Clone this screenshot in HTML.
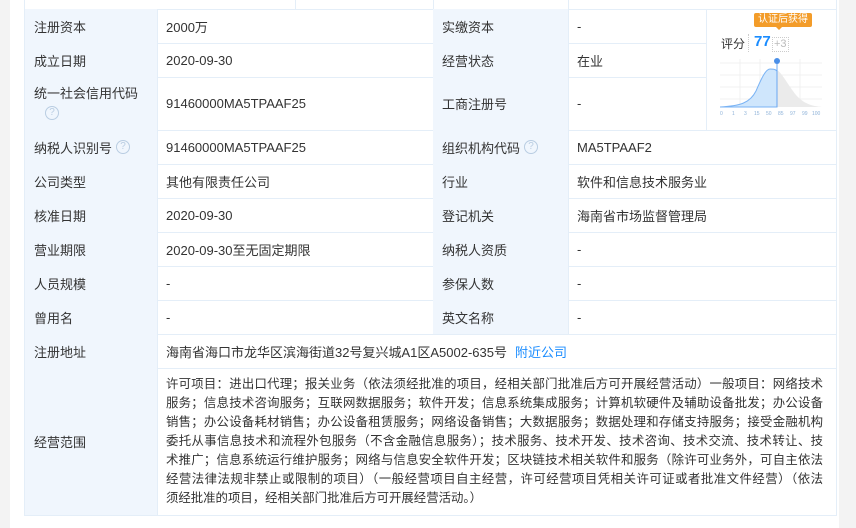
<!DOCTYPE html>
<html><head><meta charset="utf-8"><style>
*{margin:0;padding:0;box-sizing:border-box}
body{width:856px;height:528px;background:#fff;position:relative;overflow:hidden;font-family:"Liberation Sans","Noto Sans CJK SC",sans-serif;font-size:13px;color:#333}
.g{position:absolute;background:#f3f3f3}
.c{position:absolute;border-right:1px solid #e4eef8;border-bottom:1px solid #e4eef8;display:flex;align-items:center;padding-left:9px}
.l{background:#f0f6fd}
.q{display:inline-block;width:14px;height:14px;border:1px solid #b9cde2;border-radius:50%;color:#b9cde2;font-size:10px;line-height:12px;text-align:center;margin-left:4px;vertical-align:middle}
.sc div{display:block;text-align:justify;text-align-last:justify;white-space:nowrap;height:19px;line-height:19px;font-size:12.4px;overflow:visible}
</style></head><body>
<div class="g" style="left:0;top:0;width:10px;height:528px"></div>
<div class="g" style="left:839px;top:0;width:17px;height:528px"></div>
<div style="position:absolute;left:24px;top:0;width:813px;height:516px;border-left:1px solid #e4eef8"></div>
<div class="c" style="left:24px;top:0;width:134px;height:10px;border-right:none"></div>
<div class="c" style="left:157px;top:0;width:139px;height:10px"></div>
<div class="c" style="left:295px;top:0;width:139px;height:10px"></div>
<div class="c" style="left:433px;top:0;width:136px;height:10px"></div>
<div class="c" style="left:568px;top:0;width:269px;height:10px"></div>

<div class="c l" style="left:25px;top:9px;width:133px;height:35px">注册资本</div>
<div class="c" style="left:157px;top:9px;width:277px;height:35px">2000万</div>
<div class="c l" style="left:433px;top:9px;width:136px;height:35px">实缴资本</div>
<div class="c" style="left:568px;top:9px;width:139px;height:35px">-</div>

<div class="c l" style="left:25px;top:43px;width:133px;height:35px">成立日期</div>
<div class="c" style="left:157px;top:43px;width:277px;height:35px">2020-09-30</div>
<div class="c l" style="left:433px;top:43px;width:136px;height:35px">经营状态</div>
<div class="c" style="left:568px;top:43px;width:139px;height:35px">在业</div>

<div class="c l" style="left:25px;top:77px;width:133px;height:54px;display:block;padding-top:8px;line-height:18px">统一社会信用代码<br><span class="q" style="margin-left:11px">?</span></div>
<div class="c" style="left:157px;top:77px;width:277px;height:54px">91460000MA5TPAAF25</div>
<div class="c l" style="left:433px;top:77px;width:136px;height:54px">工商注册号</div>
<div class="c" style="left:568px;top:77px;width:139px;height:54px">-</div>

<div class="c" style="left:706px;top:9px;width:131px;height:122px;display:block;padding:0">
<div style="position:absolute;left:48px;top:4px;background:#f39c29;color:#fff;font-size:10px;line-height:14px;padding:0 4px;border-radius:2px">认证后获得</div>
<div style="position:absolute;left:70px;top:18px;width:0;height:0;border:3px solid transparent;border-top-color:#f39c29"></div>
<div style="position:absolute;left:15px;top:26px;font-size:12px;color:#333">评分</div>
<div style="position:absolute;left:42px;top:25px;height:18px;border-left:1px dotted #ccc"></div>
<div style="position:absolute;left:48px;top:24px;font-size:15px;font-weight:bold;color:#1a8cff">77</div>
<div style="position:absolute;left:66px;top:28px;border:1px dotted #ccc;font-size:11px;color:#bbb;padding:0 1px;line-height:13px">+3</div>
<svg style="position:absolute;left:14px;top:46px" width="106" height="62" viewBox="0 0 106 62">
<g stroke="#f0f0f0" stroke-width="1"><line x1="0" y1="8" x2="102" y2="8"/><line x1="0" y1="20" x2="102" y2="20"/><line x1="0" y1="32" x2="102" y2="32"/><line x1="0" y1="44" x2="102" y2="44"/><line x1="20" y1="4" x2="20" y2="52"/><line x1="40" y1="4" x2="40" y2="52"/><line x1="80" y1="4" x2="80" y2="52"/></g>
<path d="M57 15 C62 18 68 30 76 40 C84 49 92 51 102 52 L57 52Z" fill="#ebebeb"/>
<path d="M0 52 C20 51 30 48 36 36 C42 22 46 14 50 14 C53 14 55 14 57 16 L57 52Z" fill="#cfe6fc" stroke="#7ab3f4"/>
<line x1="57" y1="6" x2="57" y2="52" stroke="#6aa7f2"/>
<circle cx="57" cy="6" r="3" fill="#4a8fe8"/>
<g font-size="5" fill="#8fb3d9" font-family="Liberation Sans"><text x="0" y="60">0</text><text x="12" y="60">1</text><text x="24" y="60">3</text><text x="34" y="60">15</text><text x="46" y="60">50</text><text x="58" y="60">85</text><text x="70" y="60">97</text><text x="82" y="60">99</text><text x="92" y="60">100</text></g>
</svg>
</div>

<div class="c l" style="left:25px;top:130px;width:133px;height:35px">纳税人识别号<span class="q">?</span></div>
<div class="c" style="left:157px;top:130px;width:277px;height:35px">91460000MA5TPAAF25</div>
<div class="c l" style="left:433px;top:130px;width:136px;height:35px">组织机构代码<span class="q">?</span></div>
<div class="c" style="left:568px;top:130px;width:269px;height:35px">MA5TPAAF2</div>

<div class="c l" style="left:25px;top:164px;width:133px;height:35px">公司类型</div>
<div class="c" style="left:157px;top:164px;width:277px;height:35px">其他有限责任公司</div>
<div class="c l" style="left:433px;top:164px;width:136px;height:35px">行业</div>
<div class="c" style="left:568px;top:164px;width:269px;height:35px">软件和信息技术服务业</div>

<div class="c l" style="left:25px;top:198px;width:133px;height:35px">核准日期</div>
<div class="c" style="left:157px;top:198px;width:277px;height:35px">2020-09-30</div>
<div class="c l" style="left:433px;top:198px;width:136px;height:35px">登记机关</div>
<div class="c" style="left:568px;top:198px;width:269px;height:35px">海南省市场监督管理局</div>

<div class="c l" style="left:25px;top:232px;width:133px;height:35px">营业期限</div>
<div class="c" style="left:157px;top:232px;width:277px;height:35px">2020-09-30至无固定期限</div>
<div class="c l" style="left:433px;top:232px;width:136px;height:35px">纳税人资质</div>
<div class="c" style="left:568px;top:232px;width:269px;height:35px">-</div>

<div class="c l" style="left:25px;top:266px;width:133px;height:35px">人员规模</div>
<div class="c" style="left:157px;top:266px;width:277px;height:35px">-</div>
<div class="c l" style="left:433px;top:266px;width:136px;height:35px">参保人数</div>
<div class="c" style="left:568px;top:266px;width:269px;height:35px">-</div>

<div class="c l" style="left:25px;top:300px;width:133px;height:35px">曾用名</div>
<div class="c" style="left:157px;top:300px;width:277px;height:35px">-</div>
<div class="c l" style="left:433px;top:300px;width:136px;height:35px">英文名称</div>
<div class="c" style="left:568px;top:300px;width:269px;height:35px">-</div>

<div class="c l" style="left:25px;top:334px;width:133px;height:35px">注册地址</div>
<div class="c" style="left:157px;top:334px;width:680px;height:35px">海南省海口市龙华区滨海街道32号复兴城A1区A5002-635号<span style="color:#1a8cff;margin-left:8px">附近公司</span></div>

<div class="c l" style="left:25px;top:368px;width:133px;height:148px">经营范围</div>
<div class="c" style="left:157px;top:368px;width:680px;height:148px;display:block;padding:7px 0 0 9px">
<div class="sc" style="width:657px">
<div>许可项目：进出口代理；报关业务（依法须经批准的项目，经相关部门批准后方可开展经营活动）一般项目：网络技术</div>
<div>服务；信息技术咨询服务；互联网数据服务；软件开发；信息系统集成服务；计算机软硬件及辅助设备批发；办公设备</div>
<div>销售；办公设备耗材销售；办公设备租赁服务；网络设备销售；大数据服务；数据处理和存储支持服务；接受金融机构</div>
<div>委托从事信息技术和流程外包服务（不含金融信息服务）；技术服务、技术开发、技术咨询、技术交流、技术转让、技</div>
<div>术推广；信息系统运行维护服务；网络与信息安全软件开发；区块链技术相关软件和服务（除许可业务外，可自主依法</div>
<div>经营法律法规非禁止或限制的项目）（一般经营项目自主经营，许可经营项目凭相关许可证或者批准文件经营）（依法</div>
<div style="text-align-last:left;width:330px">须经批准的项目，经相关部门批准后方可开展经营活动。）</div>
</div></div>
</body></html>
